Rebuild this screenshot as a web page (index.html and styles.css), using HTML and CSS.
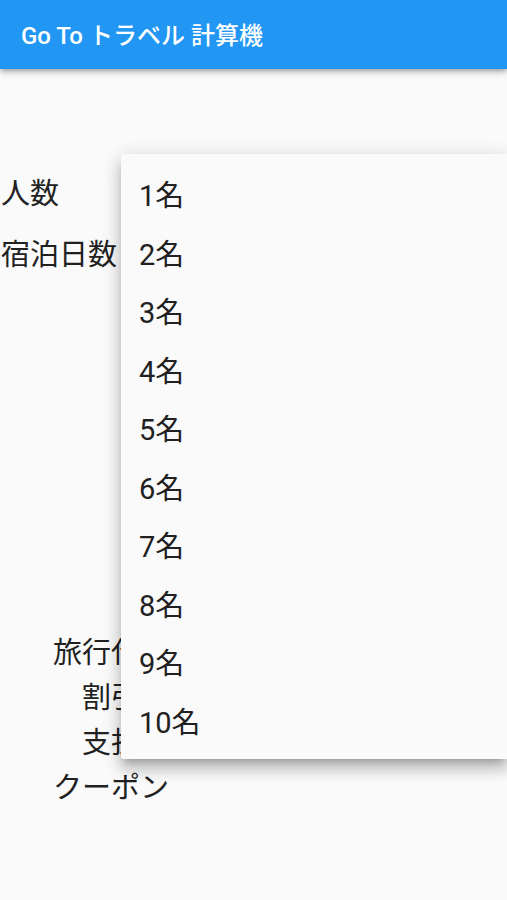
FILE: index.html
```html
<!DOCTYPE html>
<html lang="ja">
<head>
<meta charset="utf-8">
<title>Go To トラベル 計算機</title>
<link rel="stylesheet" href="styles.css">
</head>
<body>
<header class="appbar">
  <h1 class="title">Go To トラベル 計算機</h1>
</header>
<main class="content">
  <div class="field-row first">人数</div>
  <div class="field-row">宿泊日数</div>
  <div class="results">
    <div class="result-row">旅行代金</div>
    <div class="result-row">割引額</div>
    <div class="result-row">支払額</div>
    <div class="result-row">クーポン</div>
  </div>
</main>
<ul class="menu">
  <li class="menu-item">1名</li>
  <li class="menu-item">2名</li>
  <li class="menu-item">3名</li>
  <li class="menu-item">4名</li>
  <li class="menu-item">5名</li>
  <li class="menu-item">6名</li>
  <li class="menu-item">7名</li>
  <li class="menu-item">8名</li>
  <li class="menu-item">9名</li>
  <li class="menu-item">10名</li>
</ul>
</body>
</html>
```

FILE: styles.css
```css
html, body {
  margin: 0;
  padding: 0;
  background: #fafafa;
}
body {
  position: relative;
  width: 507px;
  height: 900px;
  overflow: hidden;
  font-family: "Roboto", "Noto Sans CJK JP", sans-serif;
  color: #212121;
}
.appbar {
  height: 69px;
  background: #2196f3;
  display: flex;
  align-items: center;
  padding-left: 21px;
  box-shadow: 0 2px 4px -1px rgba(0,0,0,.2), 0 4px 5px 0 rgba(0,0,0,.14), 0 1px 10px 0 rgba(0,0,0,.12);
  position: relative;
  z-index: 1;
}
.title {
  margin: 0;
  font-size: 24px;
  font-weight: 500;
  color: #ffffff;
  line-height: 1;
  padding-top: 3px;
}
.content {
  display: flex;
  flex-direction: column;
  font-size: 29px;
}
.field-row {
  height: 61px;
  line-height: 61px;
  padding-left: 1px;
}
.field-row.first {
  margin-top: 95px;
}
.results {
  margin-top: 345px;
  display: flex;
  flex-direction: column;
  padding-left: 53px;
}
.result-row {
  width: 116px;
  height: 45px;
  line-height: 45px;
  text-align: right;
}
.menu {
  position: absolute;
  left: 121px;
  right: 0;
  top: 154px;
  margin: 0;
  padding: 13px 0 7px;
  list-style: none;
  background: #fafafa;
  border-radius: 2px 0 0 2px;
  box-shadow: 0 6px 7px -4px rgba(0,0,0,.22), 0 11px 14px 1px rgba(0,0,0,.15), 0 4px 18px 3px rgba(0,0,0,.12);
  z-index: 2;
  font-size: 29px;
}
.menu-item {
  height: 58.5px;
  line-height: 58.5px;
  padding-left: 18px;
}
```
